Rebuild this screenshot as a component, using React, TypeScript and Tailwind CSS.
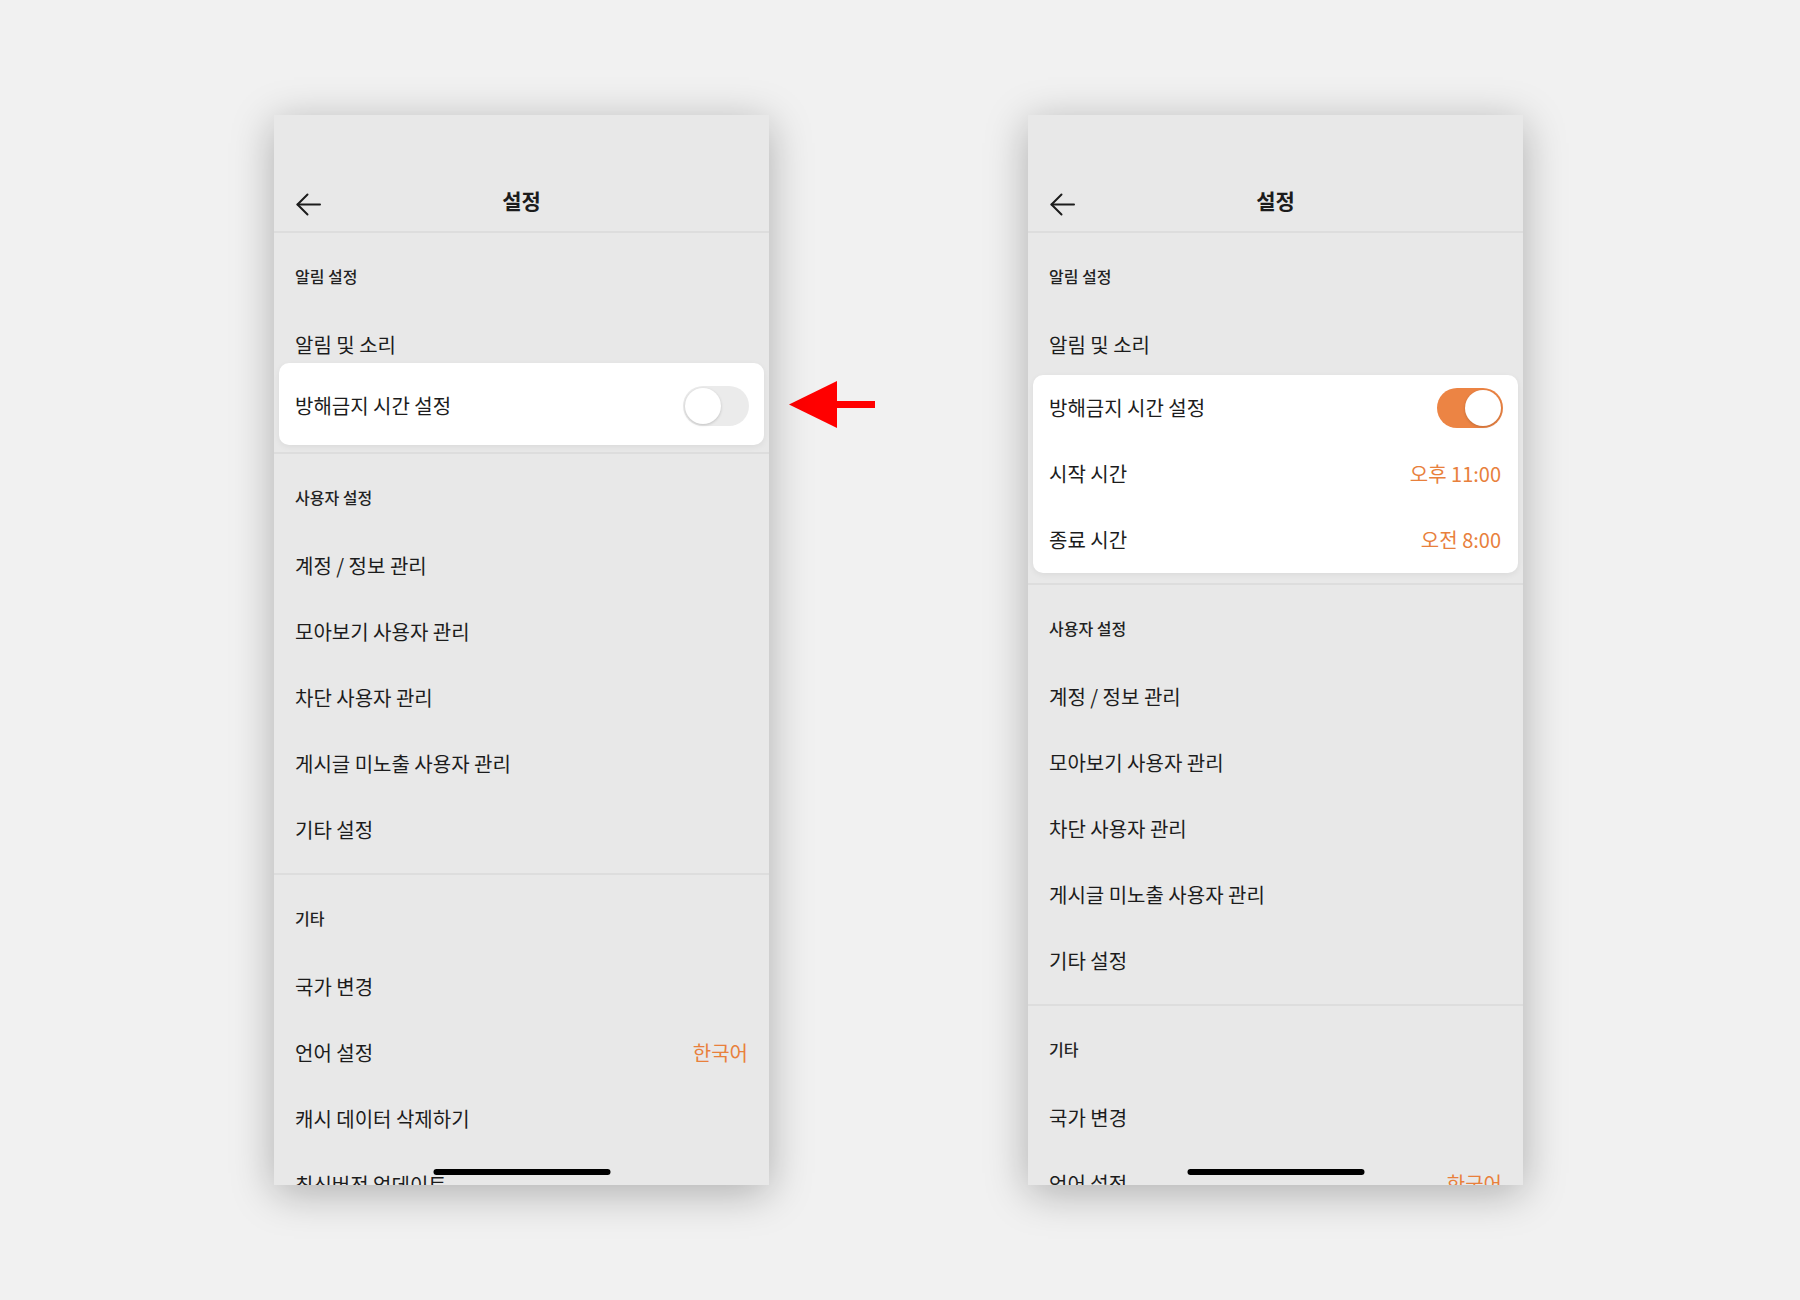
import React from 'react';

type RowProps = { label: string; value?: string; toggle?: 'on' | 'off'; inCard?: boolean };

export default function App() {
  return (
    <div className="w-full h-[1300px] bg-[#f1f1f1] flex justify-center items-center pr-[3px] font-['Noto_Sans_CJK_KR','Noto_Sans',sans-serif] text-[#1c1c1c]">
      {/* Before: quiet hours off */}
      <Phone>
        <Header />
        <div className="border-b-2 border-[#dddddd] pb-[7px]">
          <SectionLabel text="알림 설정" />
          <Row label="알림 및 소리" />
          <div className="-mt-[15px] mx-[5px] bg-white rounded-[10px] pt-[10px] pb-[6px] shadow-[0_2px_6px_rgba(0,0,0,0.06)]">
            <Row label="방해금지 시간 설정" toggle="off" inCard />
          </div>
        </div>
        <UserSection />
        <div>
          <SectionLabel text="기타" />
          <Row label="국가 변경" />
          <Row label="언어 설정" value="한국어" />
          <Row label="캐시 데이터 삭제하기" />
          <Row label="최신버전 업데이트" />
        </div>
      </Phone>

      {/* arrow pointing at the toggle */}
      <div className="w-[259px] self-start pt-[381px] pl-[20px]">
        <svg width="86" height="47" viewBox="0 0 86 47">
          <polygon points="0,23.5 48,0 48,47" fill="#ff0000" />
          <rect x="46" y="20" width="40" height="7" fill="#ff0000" />
        </svg>
      </div>

      {/* After: quiet hours on */}
      <Phone>
        <Header />
        <div className="border-b-2 border-[#dddddd] pb-[10px]">
          <SectionLabel text="알림 설정" />
          <Row label="알림 및 소리" />
          <div className="-mt-[3px] mx-[5px] bg-white rounded-[10px] shadow-[0_2px_6px_rgba(0,0,0,0.06)]">
            <Row label="방해금지 시간 설정" toggle="on" inCard />
            <Row label="시작 시간" value="오후 11:00" inCard />
            <Row label="종료 시간" value="오전 8:00" inCard />
          </div>
        </div>
        <UserSection />
        <div>
          <SectionLabel text="기타" />
          <Row label="국가 변경" />
          <Row label="언어 설정" value="한국어" />
          <Row label="캐시 데이터 삭제하기" />
        </div>
      </Phone>
    </div>
  );
}

function Phone({ children }: { children: React.ReactNode }) {
  return (
    <div className="relative w-[495px] h-[1070px] bg-[#e8e8e8] overflow-hidden shadow-[0_8px_40px_rgba(0,0,0,0.28)]">
      {children}
      <div className="absolute left-1/2 -translate-x-1/2 bottom-[10px] w-[177px] h-[6px] rounded-full bg-black" />
    </div>
  );
}

function Header() {
  return (
    <div className="pt-[62px] border-b-2 border-[#dddddd]">
      <div className="relative h-[54px] flex items-center justify-center pb-[9px]">
        <svg className="absolute left-[22px] top-[16px]" width="25" height="23" viewBox="0 0 25 23" fill="none" stroke="#1c1c1c" strokeWidth="2" strokeLinecap="round" strokeLinejoin="round">
          <path d="M24 11.5H1.5" />
          <path d="M11.5 1.5L1.5 11.5L11.5 21.5" />
        </svg>
        <span className="text-[21px] leading-[28px] font-semibold">설정</span>
      </div>
    </div>
  );
}

function SectionLabel({ text }: { text: string }) {
  return (
    <div className="px-[21px] pt-[33px] pb-[26px] text-[16px] leading-[20px] font-medium text-[#222222]">
      {text}
    </div>
  );
}

function UserSection() {
  return (
    <div className="border-b-2 border-[#dddddd] pb-[10px]">
      <SectionLabel text="사용자 설정" />
      <Row label="계정 / 정보 관리" />
      <Row label="모아보기 사용자 관리" />
      <Row label="차단 사용자 관리" />
      <Row label="게시글 미노출 사용자 관리" />
      <Row label="기타 설정" />
    </div>
  );
}

function Row({ label, value, toggle, inCard }: RowProps) {
  return (
    <div className={`h-[66px] flex items-center justify-between ${inCard ? 'pl-[16px] pr-[17px]' : 'px-[21px]'}`}>
      <span className="text-[20px] leading-[28px]">{label}</span>
      {value && <span className="text-[20px] leading-[28px] text-[#e8803c]">{value}</span>}
      {toggle && <Toggle on={toggle === 'on'} />}
    </div>
  );
}

function Toggle({ on }: { on: boolean }) {
  return (
    <div
      className={`w-[66px] h-[40px] -mr-[2px] rounded-full p-[2px] flex ${
        on ? 'bg-[#ec8444] justify-end' : 'bg-[#ebebeb] justify-start'
      }`}
    >
      <div className="w-[36px] h-[36px] rounded-full bg-white shadow-[0_1px_3px_rgba(0,0,0,0.18)]" />
    </div>
  );
}
